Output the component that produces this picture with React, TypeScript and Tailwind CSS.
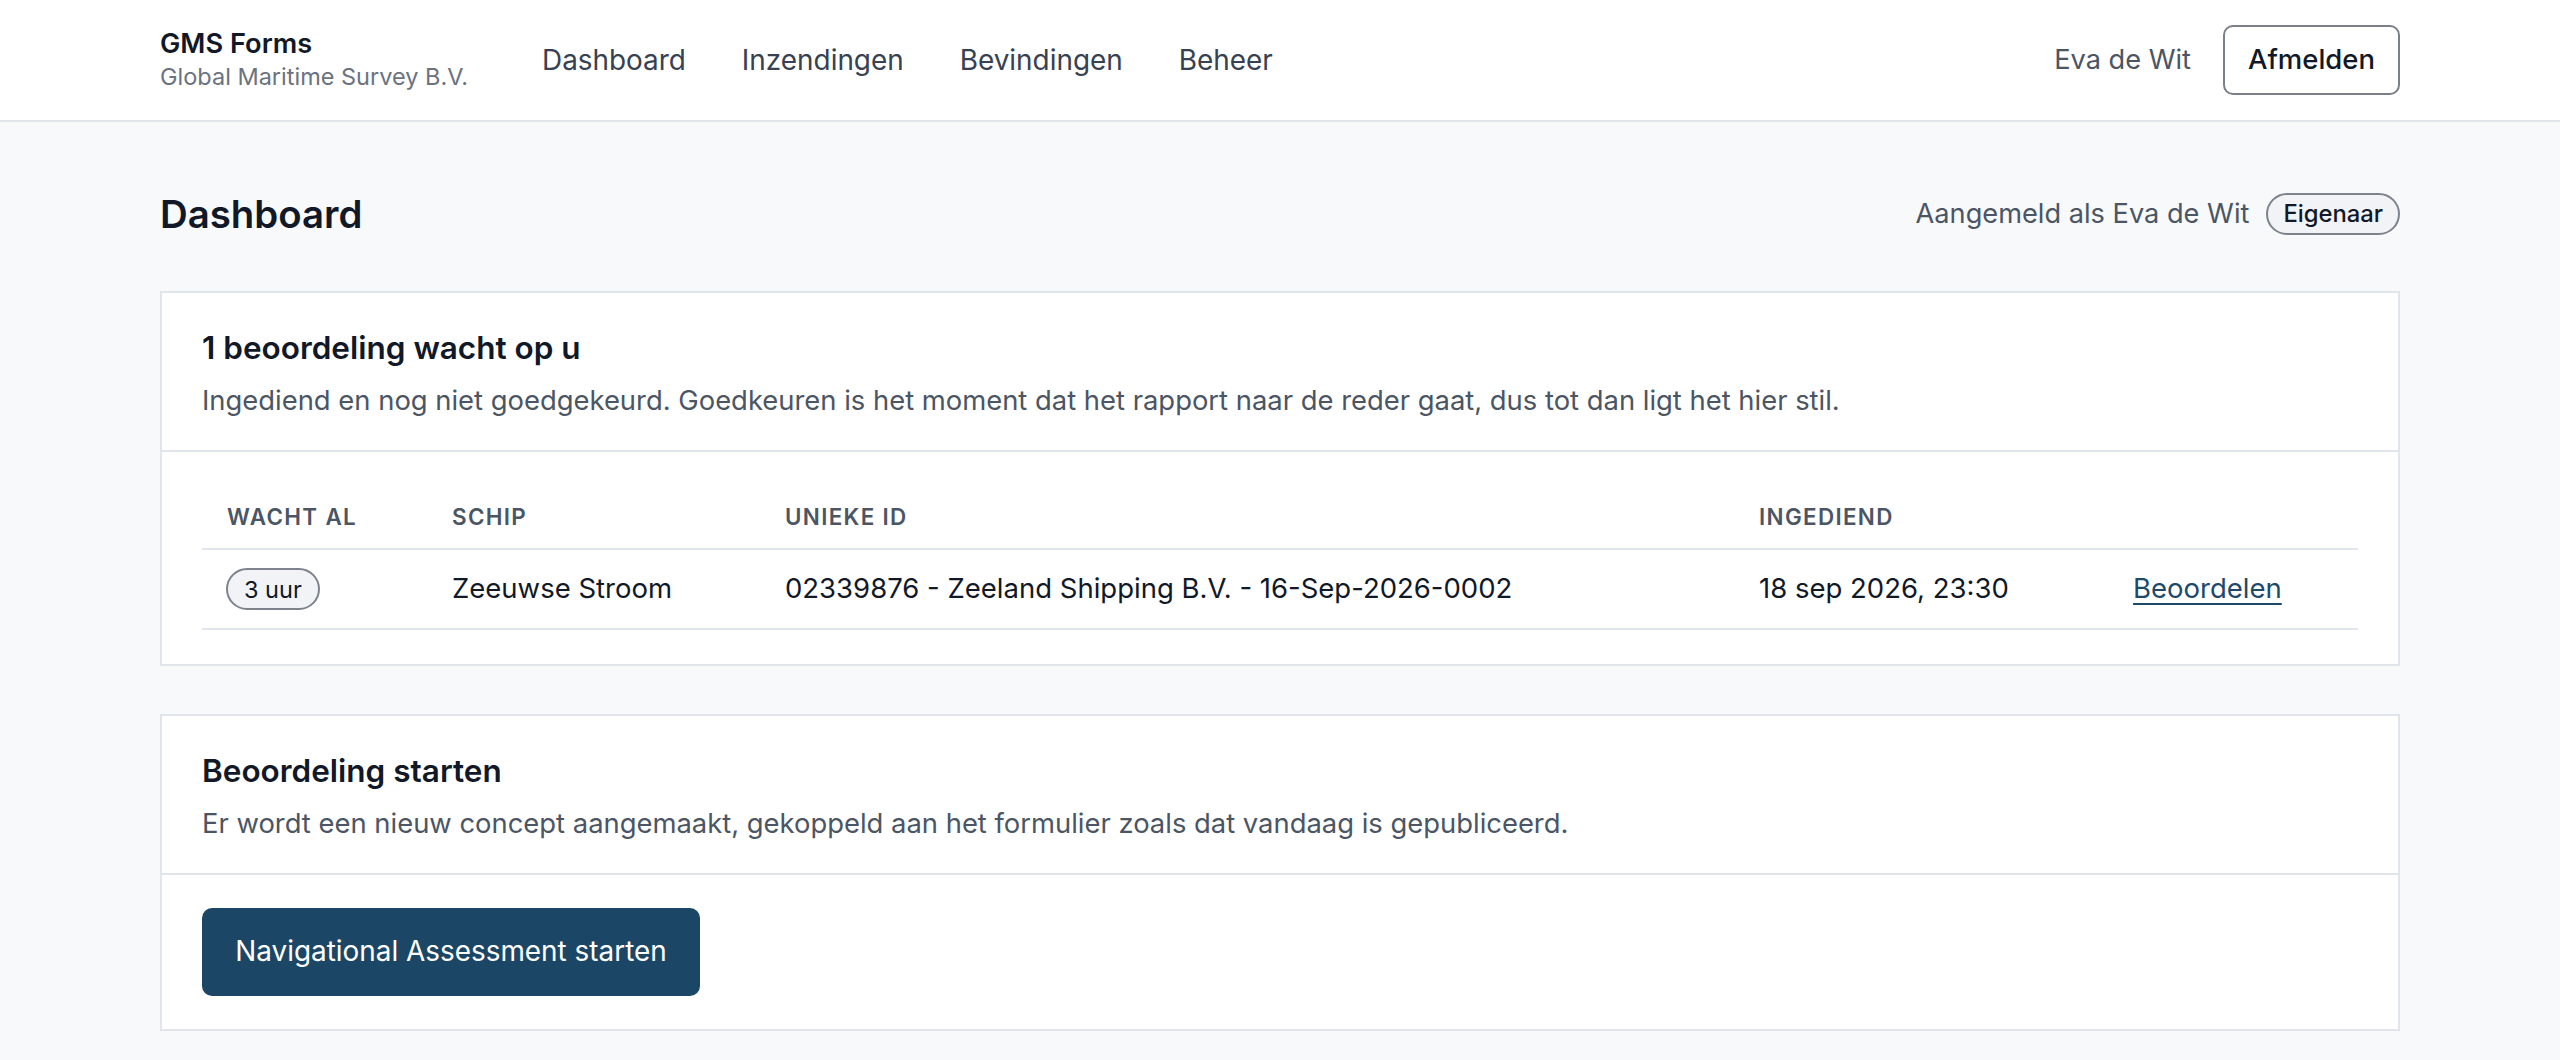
export default function App() {
  const navItems = ["Dashboard", "Inzendingen", "Bevindingen", "Beheer"];

  return (
    <div className="min-h-screen bg-[#f8f9fb] font-['Inter',sans-serif] text-[#111827]">
      {/* Top bar */}
      <header className="h-[122px] border-b-2 border-[#e0e4eb] bg-white">
        <div className="flex h-full items-center px-[160px]">
          <div className="flex w-[382px] shrink-0 flex-col">
            <span className="text-[27.2px] font-semibold leading-[34px] text-[#111827]">GMS Forms</span>
            <span className="text-[23.5px] leading-[32px] text-[#6b7280]">Global Maritime Survey B.V.</span>
          </div>
          <nav className="flex gap-[56px] text-[27.9px] text-[#374151]">
            {navItems.map((item) => (
              <a key={item} href="#" className="leading-[36px]">
                {item}
              </a>
            ))}
          </nav>
          <div className="ml-auto flex items-center gap-[32px]">
            <span className="text-[27.2px] text-[#4b5563]">Eva de Wit</span>
            <button className="h-[70px] w-[177px] rounded-[10px] border-2 border-[#7a808a] bg-white text-[27.5px] font-medium text-[#111827]">
              Afmelden
            </button>
          </div>
        </div>
      </header>

      <main className="px-[160px] pb-[31px]">
        {/* Page title row */}
        <div className="mt-[69px] mb-[54px] flex h-[46px] items-center justify-between">
          <h1 className="text-[38.4px] font-semibold leading-[46px] text-[#111827]">Dashboard</h1>
          <div className="flex items-center gap-[17px]">
            <span className="text-[27.2px] text-[#4b5563]">Aangemeld als Eva de Wit</span>
            <span className="flex h-[42px] items-center rounded-full border-2 border-[#7d838d] bg-[#f1f3f6] px-[15px] text-[23.8px] font-medium text-[#111827]">
              Eigenaar
            </span>
          </div>
        </div>

        {/* Pending reviews */}
        <section className="border-2 border-[#e0e4eb] bg-white">
          <div className="border-b-2 border-[#e0e4eb] px-[40px] pt-[35px] pb-[34px]">
            <h2 className="text-[31.5px] font-semibold leading-[40px] text-[#111827]">1 beoordeling wacht op u</h2>
            <p className="mt-[16px] text-[27.4px] leading-[32px] text-[#4b5563]">
              Ingediend en nog niet goedgekeurd. Goedkeuren is het moment dat het rapport naar de reder gaat, dus tot dan ligt het hier stil.
            </p>
          </div>
          <div className="px-[40px] py-[34px]">
            <div className="grid h-[64px] grid-cols-[225px_333px_974px_374px_1fr] items-center border-b-2 border-[#e0e4eb] text-[22.4px] font-semibold uppercase tracking-[0.06em] text-[#4b5563]">
              <span className="pl-[25px]">Wacht al</span>
              <span className="pl-[25px]">Schip</span>
              <span className="pl-[25px]">Unieke ID</span>
              <span className="pl-[25px]">Ingediend</span>
              <span></span>
            </div>
            <div className="grid h-[80px] grid-cols-[225px_333px_974px_374px_1fr] items-center border-b-2 border-[#e0e4eb] text-[27.5px] text-[#111827]">
              <span className="pl-[24px]">
                <span className="inline-flex h-[42px] items-center rounded-full border-2 border-[#7d838d] bg-[#f1f3f6] px-[16px] text-[23.5px] text-[#111827]">
                  3 uur
                </span>
              </span>
              <span className="pl-[25px]">Zeeuwse Stroom</span>
              <span className="pl-[25px]">02339876 - Zeeland Shipping B.V. - 16-Sep-2026-0002</span>
              <span className="pl-[25px]">18 sep 2026, 23:30</span>
              <span className="pl-[25px]">
                <a href="#" className="text-[#1d4a6b] underline decoration-2 underline-offset-[5px]">
                  Beoordelen
                </a>
              </span>
            </div>
          </div>
        </section>

        {/* Start a new review */}
        <section className="mt-[48px] border-2 border-[#e0e4eb] bg-white">
          <div className="border-b-2 border-[#e0e4eb] px-[40px] pt-[35px] pb-[34px]">
            <h2 className="text-[31.5px] font-semibold leading-[40px] text-[#111827]">Beoordeling starten</h2>
            <p className="mt-[16px] text-[27.4px] leading-[32px] text-[#4b5563]">
              Er wordt een nieuw concept aangemaakt, gekoppeld aan het formulier zoals dat vandaag is gepubliceerd.
            </p>
          </div>
          <div className="px-[40px] py-[33px]">
            <button className="h-[88px] w-[498px] rounded-[10px] bg-[#1c4666] text-[27.9px] text-white">
              Navigational Assessment starten
            </button>
          </div>
        </section>
      </main>
    </div>
  );
}
